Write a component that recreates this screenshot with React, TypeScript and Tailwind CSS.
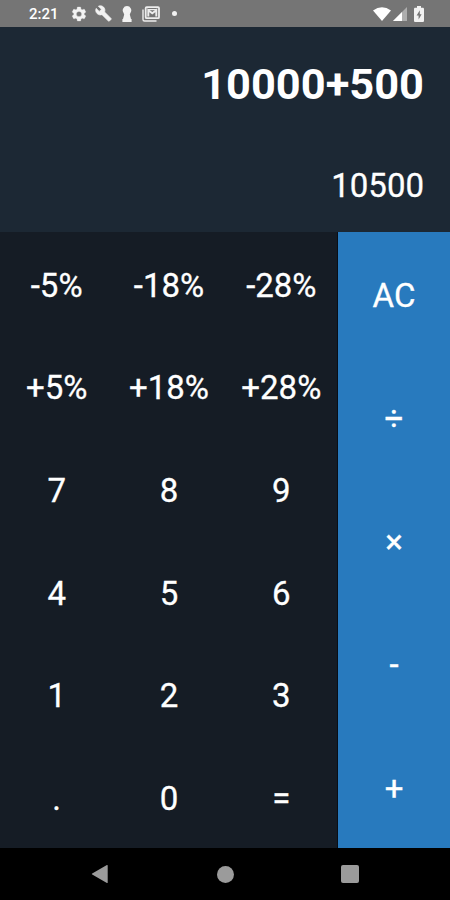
import React from 'react';

const keys = [
  '-5%', '-18%', '-28%',
  '+5%', '+18%', '+28%',
  '7', '8', '9',
  '4', '5', '6',
  '1', '2', '3',
  '.', '0', '=',
];

const operators = ['AC', '÷', '×', '-', '+'];

const StatusBar = () => {
  return (
    <header className="flex h-[27px] items-center justify-between bg-[#757575] pl-[29px] pr-[26px] text-white">
      <div className="flex items-center">
        <span className="w-[42px] pt-px text-[15px] font-medium leading-none">2:21</span>
        <svg className="h-4 w-4" viewBox="1 1 22 22" fill="#f2f2f2" stroke="#f2f2f2" strokeWidth="0.4">
          <path d="M19.14 12.94c.04-.3.06-.61.06-.94s-.02-.64-.07-.94l2.03-1.58a.49.49 0 0 0 .12-.61l-1.92-3.32a.49.49 0 0 0-.59-.22l-2.39.96c-.5-.38-1.03-.7-1.62-.94l-.36-2.54A.48.48 0 0 0 13.92 2.4h-3.84c-.24 0-.43.17-.47.41l-.36 2.54c-.59.24-1.13.57-1.62.94l-2.39-.96a.48.48 0 0 0-.59.22L2.74 8.87a.48.48 0 0 0 .12.61l2.03 1.58c-.05.3-.09.63-.09.94s.02.64.07.94l-2.03 1.58a.49.49 0 0 0-.12.61l1.92 3.32c.12.22.37.29.59.22l2.39-.96c.5.38 1.03.7 1.62.94l.36 2.54c.05.24.24.41.48.41h3.84c.24 0 .44-.17.47-.41l.36-2.54c.59-.24 1.13-.56 1.62-.94l2.39.96c.22.08.47 0 .59-.22l1.92-3.32a.48.48 0 0 0-.12-.61zM12 15.6a3.6 3.6 0 1 1 0-7.2 3.6 3.6 0 0 1 0 7.2z" />
        </svg>
        <svg className="ml-2 h-[17px] w-[17px]" viewBox="0 0 24 24" fill="#f2f2f2" stroke="#f2f2f2" strokeWidth="0.9">
          <path d="M22.7 19l-9.1-9.1c.9-2.3.4-5-1.5-6.9-2-2-5-2.4-7.4-1.3L9 6 6 9 1.6 4.7C.4 7.1.9 10.1 2.9 12.1c1.9 1.9 4.6 2.4 6.9 1.5l9.1 9.1c.4.4 1 .4 1.4 0l2.3-2.3c.5-.4.5-1.1.1-1.4z" />
        </svg>
        <svg className="ml-[10px] h-4 w-[10px]" viewBox="0 0 10 16" fill="#f2f2f2">
          <path d="M5 0a4.3 4.3 0 0 1 3.4 6.9L7.8 8.4 9 13h.6v3H.4v-3H1l1.2-4.6-.6-1.5A4.3 4.3 0 0 1 5 0z" />
        </svg>
        <svg className="ml-[10px] h-4 w-[18px]" viewBox="0 0 18 16" fill="none" stroke="#ededed">
          <path d="M1 3.5v10c0 .8.7 1.5 1.5 1.5h12" strokeWidth="1.4" />
          <rect x="3.7" y="1.2" width="13.3" height="11" rx="1" strokeWidth="1.8" />
          <path d="M6.3 10.5V4.2l4 3.1 4-3.1v6.3" strokeWidth="1.9" />
          <path d="M6 3.6h8.7" strokeWidth="1.2" />
        </svg>
        <span className="ml-[12px] h-[5px] w-[5px] rounded-full bg-[#f2f2f2]" />
      </div>
      <div className="flex items-center">
        <svg className="h-[14px] w-[18px]" viewBox="0 0 18 14" fill="#fff">
          <path d="M0 3.5Q9-3 18 3.5L9 14z" />
        </svg>
        <svg className="ml-[2px] h-[14px] w-[14px]" viewBox="0 0 14 14">
          <path d="M0 14L14 0v14z" fill="#adadad" />
          <path d="M0 14L9 5v9z" fill="#fff" />
        </svg>
        <svg className="ml-[7px] h-4 w-[10px]" viewBox="0 0 10 16">
          <path d="M3 0h4v1.8h1.7c.7 0 1.3.5 1.3 1.2v11.7c0 .7-.6 1.3-1.3 1.3H1.3C.6 16 0 15.4 0 14.7V3c0-.7.6-1.2 1.3-1.2H3z" fill="#f2f2f2" />
          <path d="M5.8 4.3L2.6 9.5h2v4l3-5.3H5.8z" fill="#757575" />
        </svg>
      </div>
    </header>
  );
};

const NavBar = () => {
  return (
    <nav className="flex h-[52px] items-center justify-between bg-black px-[91px]">
      <svg className="h-[18px] w-[18px]" viewBox="0 0 18 18" fill="#9b9b9b">
        <path d="M16.7.6v16.8c0 .5-.4.7-.8.5L1.2 9.6c-.5-.3-.5-.9 0-1.2L15.9.1c.4-.2.8 0 .8.5z" />
      </svg>
      <span className="h-[17px] w-[17px] rounded-full bg-[#9b9b9b]" />
      <span className="h-[18px] w-[18px] rounded-[2px] bg-[#9b9b9b]" />
    </nav>
  );
};

const App = () => {
  return (
    <div className="flex h-[900px] w-[450px] flex-col overflow-hidden bg-[#151c25] font-[Roboto,sans-serif] text-white">
      <StatusBar />
      <section className="flex h-[205px] flex-col items-end bg-[#1c2834] pr-[26px]">
        <div className="mt-8 text-[43.4px] font-bold leading-[52px]">10000+500</div>
        <div className="mt-[55px] text-[33px] leading-10 [-webkit-text-stroke:0.3px]">10500</div>
      </section>
      <main className="flex h-[616px]">
        <div className="grid w-[338px] grid-cols-3 grid-rows-6 border-r border-[#080e16] text-[33px] [-webkit-text-stroke:0.3px]">
          {keys.map((key) => (
            <button key={key} className="flex items-center justify-center pl-px pt-1">
              {key}
            </button>
          ))}
        </div>
        <div className="grid flex-1 grid-rows-5 bg-[#287abe] text-[33px] [-webkit-text-stroke:0.3px]">
          {operators.map((op) => (
            <button key={op} className="flex items-center justify-center pt-1">
              {op}
            </button>
          ))}
        </div>
      </main>
      <NavBar />
    </div>
  );
};

export default App;
